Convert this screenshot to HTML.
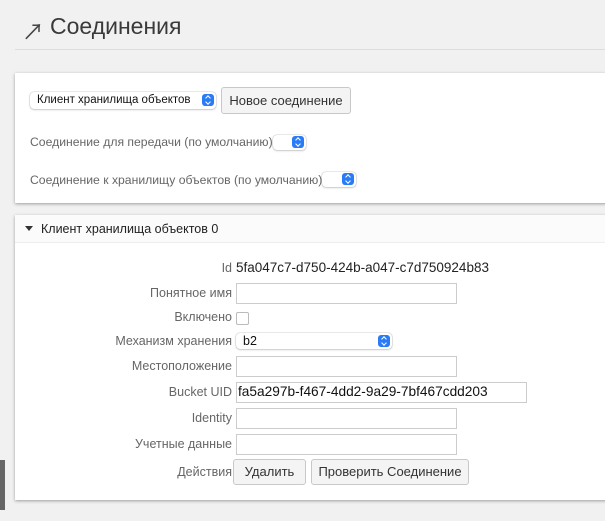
<!DOCTYPE html><html><head><meta charset="utf-8"><style>
body{margin:0;width:605px;height:521px;background:#f1f1f1;position:relative;overflow:hidden;font-family:"Liberation Sans","Noto Sans CJK JP",sans-serif;}
.a{position:absolute;white-space:nowrap}
.panel{position:absolute;left:15px;width:600px;background:#fff;box-shadow:0 1px 3px rgba(0,0,0,.35);}
.lbl{position:absolute;right:373px;font-size:12.5px;color:#666;text-align:right;white-space:nowrap}
.inp{position:absolute;left:236px;width:219px;height:19px;border:1px solid #ccc;background:#fff}
.sel{position:absolute;background:#fff;border-radius:4px;box-shadow:0 0 1px rgba(0,0,0,.5),0 1px 2px rgba(0,0,0,.15)}
.sel i{position:absolute;right:2px;top:2px;width:12px;height:12px;border-radius:3px;background:#2a7bf6}
.sel i:before{content:"";position:absolute;left:4px;top:2px;width:3px;height:3px;border-left:1px solid #fff;border-top:1px solid #fff;transform:rotate(45deg)}
.sel i:after{content:"";position:absolute;left:4px;top:6px;width:3px;height:3px;border-right:1px solid #fff;border-bottom:1px solid #fff;transform:rotate(45deg)}
.btn{position:absolute;border:1px solid #c8c8c8;border-radius:3px;background:#f4f4f4;font-size:13px;color:#333;text-align:center;box-sizing:border-box}
</style></head><body>
<div class="a" style="left:22px;top:15px;font-size:22px;color:#444">↗</div>
<div class="a" style="left:50px;top:13px;font-size:23px;color:#3a3a3a">Соединения</div>
<div class="a" style="left:15px;top:49px;width:590px;height:1px;background:#ddd"></div>

<div class="panel" style="top:73px;height:130px"></div>
<div class="sel" style="left:30px;top:92px;width:186px;height:17px"><span class="a" style="left:7px;top:2px;font-size:11.5px;color:#111">Клиент хранилища объектов</span><i></i></div>
<div class="btn" style="left:221px;top:87px;width:130px;height:27px;line-height:25px">Новое соединение</div>
<div class="a" style="left:30px;top:135px;font-size:12.2px;color:#666">Соединение для передачи (по умолчанию)</div>
<div class="sel" style="left:273px;top:135px;width:33px;height:15px"><i style="top:1px"></i></div>
<div class="a" style="left:30px;top:173px;font-size:12.2px;color:#666">Соединение к хранилищу объектов (по умолчанию)</div>
<div class="sel" style="left:322px;top:172px;width:34px;height:15px"><i style="top:1px"></i></div>

<div class="panel" style="top:215px;height:285px"></div>
<div class="a" style="left:15px;top:215px;width:590px;height:27px;background:#fbfbfb;border-bottom:1px solid #eee"></div>
<div class="a" style="left:25px;top:226px;width:0;height:0;border-left:4px solid transparent;border-right:4px solid transparent;border-top:5px solid #333"></div>
<div class="a" style="left:41px;top:222px;font-size:12.5px;color:#222">Клиент хранилища объектов 0</div>

<div class="lbl" style="top:261px">Id</div>
<div class="a" style="left:236px;top:260px;font-size:13.5px;color:#222">5fa047c7-d750-424b-a047-c7d750924b83</div>
<div class="lbl" style="top:286px">Понятное имя</div><div class="inp" style="top:283px"></div>
<div class="lbl" style="top:310px">Включено</div>
<div class="a" style="left:236px;top:312px;width:11px;height:11px;border:1px solid #bbb;border-radius:2px;background:#fff"></div>
<div class="lbl" style="top:334px">Механизм хранения</div>
<div class="sel" style="left:236px;top:333px;width:156px;height:16px"><span class="a" style="left:7px;top:1px;font-size:12.5px;color:#111">b2</span><i style="top:2px"></i></div>
<div class="lbl" style="top:359px">Местоположение</div><div class="inp" style="top:356px"></div>
<div class="lbl" style="top:385px">Bucket UID</div><div class="inp" style="top:382px;width:289px"><span class="a" style="left:1px;top:1px;font-size:13.7px;color:#111">fa5a297b-f467-4dd2-9a29-7bf467cdd203</span></div>
<div class="lbl" style="top:411px">Identity</div><div class="inp" style="top:408px"></div>
<div class="lbl" style="top:437px">Учетные данные</div><div class="inp" style="top:434px"></div>
<div class="lbl" style="top:465px">Действия</div>
<div class="btn" style="left:233px;top:459px;width:73px;height:26px;line-height:24px">Удалить</div>
<div class="btn" style="left:311px;top:459px;width:158px;height:26px;line-height:24px">Проверить Соединение</div>
<div class="a" style="left:0;top:460px;width:5px;height:50px;background:#666"></div>
</body></html>
